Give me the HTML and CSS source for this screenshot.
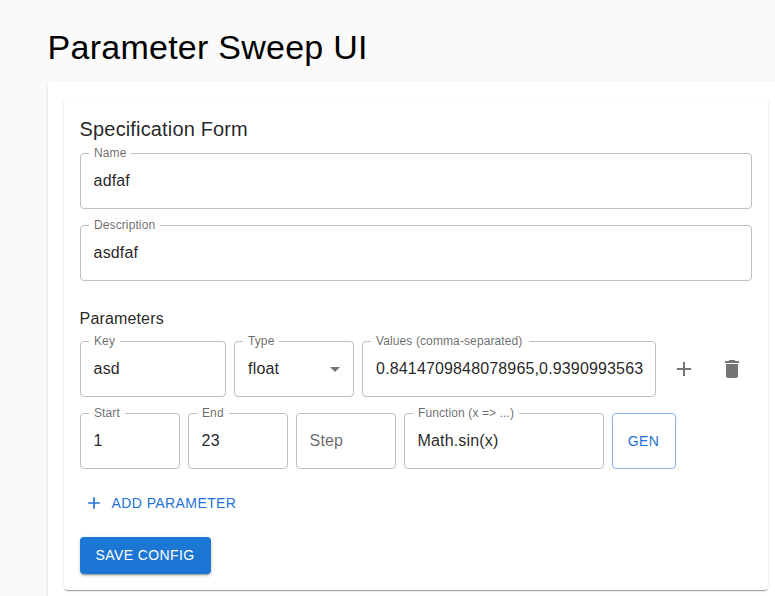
FILE: index.html
```html
<!DOCTYPE html>
<html lang="en">
<head>
<meta charset="utf-8">
<title>Parameter Sweep UI</title>
<link rel="stylesheet" href="styles.css">
</head>
<body>
<main class="page">
  <h1 class="page-title">Parameter Sweep UI</h1>
  <section class="paper outer">
    <form class="paper inner">
      <h2 class="form-title">Specification Form</h2>
      <fieldset class="field wide"><legend>Name</legend><div class="value">adfaf</div></fieldset>
      <fieldset class="field wide second"><legend>Description</legend><div class="value">asdfaf</div></fieldset>
      <h3 class="subtitle">Parameters</h3>
      <div class="row">
        <fieldset class="field key"><legend>Key</legend><div class="value">asd</div></fieldset>
        <fieldset class="field type"><legend>Type</legend><div class="value">float<svg class="arrow" viewBox="0 0 24 24"><path d="M7 10l5 5 5-5z"/></svg></div></fieldset>
        <fieldset class="field values"><legend>Values (comma-separated)</legend><div class="value">0.8414709848078965,0.9390993563</div></fieldset>
        <button type="button" class="icon-button"><svg viewBox="0 0 24 24"><path d="M19 13h-6v6h-2v-6H5v-2h6V5h2v6h6v2z"/></svg></button>
        <button type="button" class="icon-button"><svg viewBox="0 0 24 24"><path d="M6 19c0 1.100.9 2 2 2h8c1.100 0 2-.9 2-2V7H6v12zM19 4h-3.500l-1-1h-5l-1 1H5v2h14V4z"/></svg></button>
      </div>
      <div class="row generator">
        <fieldset class="field num"><legend>Start</legend><div class="value">1</div></fieldset>
        <fieldset class="field num"><legend>End</legend><div class="value">23</div></fieldset>
        <fieldset class="field num no-label"><div class="value placeholder">Step</div></fieldset>
        <fieldset class="field func"><legend>Function (x =&gt; ...)</legend><div class="value">Math.sin(x)</div></fieldset>
        <button type="button" class="button outlined">GEN</button>
      </div>
      <button type="button" class="button text"><svg viewBox="0 0 24 24"><path d="M19 13h-6v6h-2v-6H5v-2h6V5h2v6h6v2z"/></svg>ADD PARAMETER</button>
      <button type="button" class="button contained">SAVE CONFIG</button>
    </form>
  </section>
</main>
</body>
</html>
```
FILE: styles.css
```css
* { box-sizing: border-box; }
html { overflow: hidden; }
body {
  margin: 0;
  background: #fafafa;
  color: rgba(0, 0, 0, .87);
  font-family: "Liberation Sans", Arial, sans-serif;
}
svg { width: 24px; height: 24px; fill: currentColor; flex: none; }
.page { padding: 26px 0 0 47.6px; }
.page-title {
  margin: 0 0 13px;
  color: #000;
  font-size: 34px;
  font-weight: 400;
  line-height: 42px;
  letter-spacing: .25px;
}
.paper {
  background: #fff;
  border-radius: 4px;
  box-shadow: 0 2px 1px -1px rgba(0,0,0,.2), 0 1px 1px rgba(0,0,0,.14), 0 1px 3px rgba(0,0,0,.12);
}
.outer { width: 737px; padding: 16px; }
.inner {
  width: 704.6px;
  height: 493px;
  padding: 16px;
  display: flex;
  flex-direction: column;
  align-items: flex-start;
}
.form-title { margin: 0 0 8px; font-size: 20px; font-weight: 400; line-height: 32px; letter-spacing: .15px; }
.subtitle { margin: 24px 0 8px; font-size: 16px; font-weight: 400; line-height: 28px; letter-spacing: .15px; }
.field {
  flex: none;
  min-width: 0;
  height: 61px;
  margin: -5px 0 0;
  padding: 0 13px 0 8px;
  border: 1px solid rgba(0,0,0,.25);
  border-radius: 4px;
}
.field legend {
  height: 11px;
  padding: 0 5px 0 5.4px;
  color: rgba(0,0,0,.6);
  font-size: 12px;
  line-height: 11px;
  letter-spacing: .11px;
  white-space: nowrap;
}
.value {
  display: flex;
  align-items: center;
  height: 44px;
  padding-left: 5px;
  font-size: 16px;
  letter-spacing: .15px;
  white-space: nowrap;
}
.wide { width: 672px; }
.second { margin-top: 11px; }
.row { display: flex; gap: 8px; }
.generator { margin-top: 16px; }
.key { width: 146px; }
.type { width: 120px; padding-right: 6px; }
.arrow { margin-left: auto; color: rgba(0,0,0,.54); }
.values { width: 294px; }
.type .value, .values .value { padding-left: 5.5px; }
.values legend { padding-right: 7px; }
.num { width: 100px; }
.no-label { height: 56px; margin: 0; }
.no-label .value { height: 54px; }
.placeholder { color: rgba(0,0,0,.6); }
.func { width: 200px; }
.icon-button {
  display: flex;
  width: 40px;
  height: 40px;
  margin-top: 8px;
  padding: 8px;
  border: 0;
  background: none;
  color: rgba(0,0,0,.54);
}
.button {
  display: flex;
  align-items: center;
  justify-content: center;
  border: 0;
  border-radius: 4px;
  background: none;
  color: #2273d6;
  font: 14px/24.5px "Liberation Sans", Arial, sans-serif;
  letter-spacing: .4px;
}
.outlined { width: 64px; height: 56px; border: 1px solid #8cb6ea; }
.text { height: 36px; margin: 16px 0 1px; padding: 0 8px; gap: 8px; }
.text svg { width: 20px; height: 20px; margin-left: -4px; }
.contained {
  height: 37px;
  margin-top: 15px;
  padding: 0 16px;
  background: #1b76d4;
  color: #fff;
  box-shadow: 0 3px 1px -2px rgba(0,0,0,.2), 0 2px 2px rgba(0,0,0,.14), 0 1px 5px rgba(0,0,0,.12);
}
```
